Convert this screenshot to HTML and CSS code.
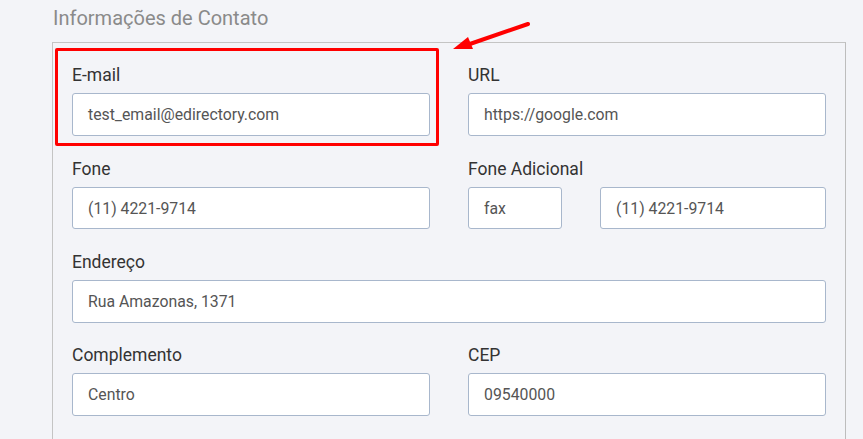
FILE: index.html
```html
<!DOCTYPE html>
<html lang="pt-BR">
<head>
<meta charset="utf-8">
<title>Informações de Contato</title>
<link rel="stylesheet" href="styles.css">
</head>
<body>
<div class="page">
  <h2 class="section-title">Informações de Contato</h2>
  <div class="panel">
    <div class="row">
      <div class="field">
        <label class="label">E-mail</label>
        <div class="input">test_email@edirectory.com</div>
      </div>
      <div class="field">
        <label class="label">URL</label>
        <div class="input">https://google.com</div>
      </div>
    </div>
    <div class="row">
      <div class="field">
        <label class="label">Fone</label>
        <div class="input">(11) 4221-9714</div>
      </div>
      <div class="field">
        <label class="label">Fone Adicional</label>
        <div class="pair">
          <div class="input input-small">fax</div>
          <div class="input input-grow">(11) 4221-9714</div>
        </div>
      </div>
    </div>
    <div class="row">
      <div class="field field-full">
        <label class="label">Endereço</label>
        <div class="input">Rua Amazonas, 1371</div>
      </div>
    </div>
    <div class="row">
      <div class="field">
        <label class="label">Complemento</label>
        <div class="input">Centro</div>
      </div>
      <div class="field">
        <label class="label">CEP</label>
        <div class="input">09540000</div>
      </div>
    </div>
  </div>
  <div class="highlight"></div>
  <svg class="arrow" width="90" height="40" viewBox="0 0 90 40">
    <line x1="83" y1="4" x2="22" y2="25" stroke="#ff0000" stroke-width="4" stroke-linecap="round"/>
    <polygon points="8,29 23,17 28,29" fill="#ff0000"/>
  </svg>
</div>
</body>
</html>
```

FILE: styles.css
```css
html, body {
  margin: 0;
  padding: 0;
}
body {
  background: #f3f4f8;
  font-family: Roboto, "Liberation Sans", Arial, sans-serif;
  width: 863px;
  height: 439px;
  overflow: hidden;
}
.page {
  position: relative;
  padding: 5px 0 0 52px;
}
.section-title {
  margin: 0 0 11px 1px;
  font-size: 20px;
  line-height: 26px;
  font-weight: 400;
  color: #8a8a8a;
}
.panel {
  width: 754px;
  border: 1px solid #c4c4c4;
  border-right-color: #bdbdbd;
  padding: 20px 19px 40px 19px;
  display: flex;
  flex-direction: column;
  gap: 21px;
}
.row {
  display: flex;
  gap: 38px;
}
.field {
  flex: 1 1 0;
  display: flex;
  flex-direction: column;
  gap: 6px;
  min-width: 0;
}
.label {
  font-size: 17.5px;
  line-height: 24px;
  color: #333;
}
.input {
  box-sizing: border-box;
  height: 43px;
  background: #fff;
  border: 1px solid #a8b7cc;
  border-radius: 3px;
  padding: 0 15px;
  display: flex;
  align-items: center;
  font-size: 15.8px;
  color: #555;
  white-space: nowrap;
}
.row:nth-child(2) .input {
  height: 42px;
}
.row:nth-child(3) .input {
  height: 43px;
}
.row:nth-child(4) {
  margin-top: -1px;
}
.pair {
  display: flex;
  gap: 38px;
}
.input-small {
  width: 94px;
  flex: 0 0 94px;
}
.input-grow {
  flex: 1 1 auto;
}
.highlight {
  position: absolute;
  left: 55px;
  top: 48px;
  width: 378px;
  height: 92px;
  border: 3px solid #ff0000;
  border-radius: 2px;
}
.arrow {
  position: absolute;
  left: 445px;
  top: 20px;
}
```
